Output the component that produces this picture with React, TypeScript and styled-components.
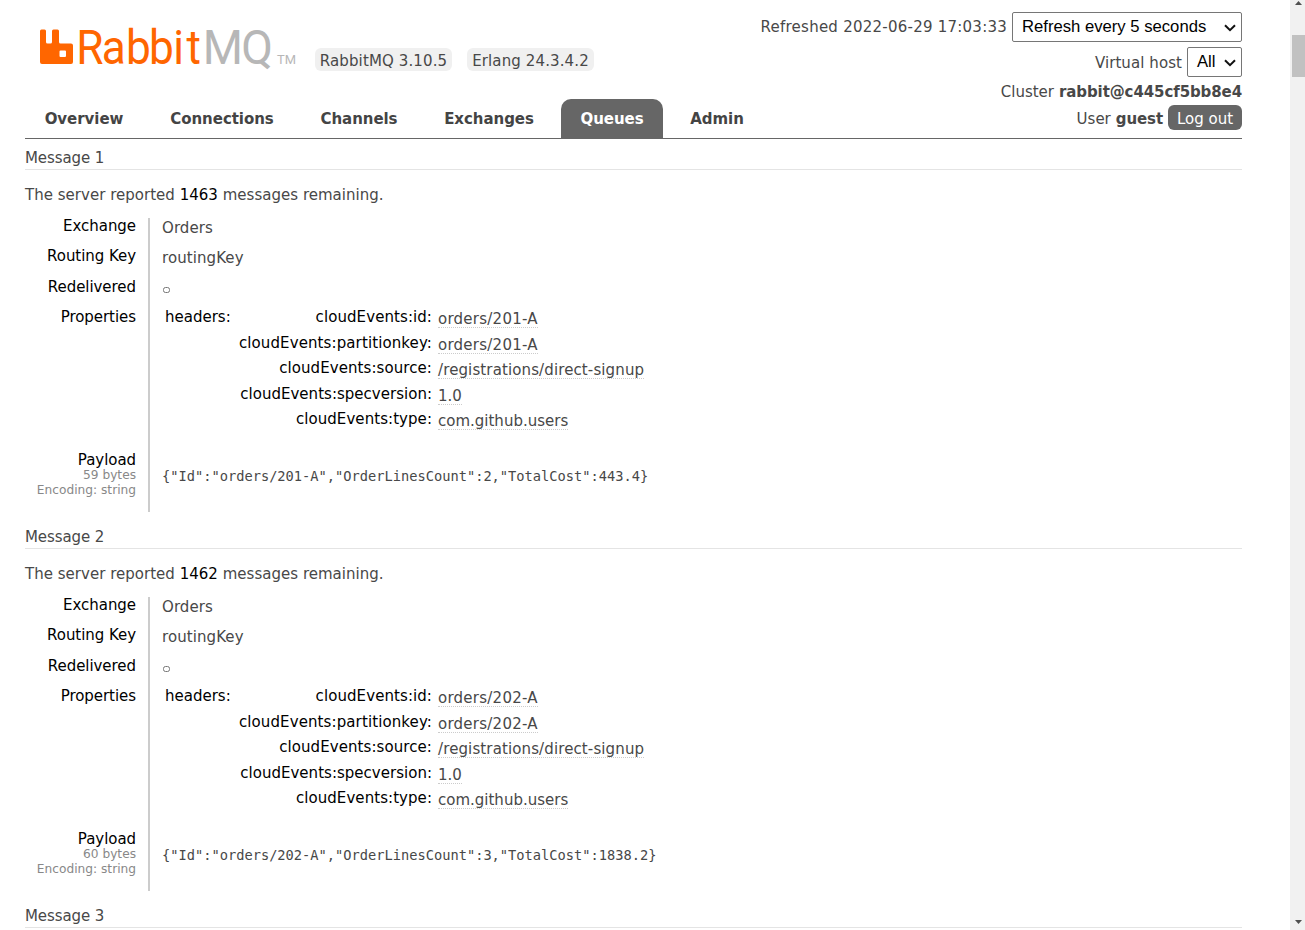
import React from 'react';
import styled, { createGlobalStyle, css } from 'styled-components';

const GlobalStyle = createGlobalStyle`
  html, body { margin: 0; padding: 0; background: #fff; }
  body {
    height: 930px;
    overflow: hidden;
    color: #484848;
    font: 15px/18px Verdana, "DejaVu Sans", sans-serif;
  }
  * { box-sizing: border-box; }
`;

const Page = styled.div`
  display: flex;
  width: 1305px;
  height: 930px;
  overflow: hidden;
`;

const Content = styled.div`
  flex: 1;
  min-width: 0;
  padding: 0 48px 0 25px;
  overflow: hidden;
`;

const Header = styled.header`
  display: grid;
  grid-template-columns: 730px 487px;
  height: 139px;
  border-bottom: 1px solid #666;
`;

const Brand = styled.div`
  display: flex;
  flex-direction: column;
  justify-content: space-between;
`;

const LogoRow = styled.div`
  display: flex;
  align-items: flex-start;
  padding: 24px 0 0 14px;
`;

const LogoSvg = styled.svg`
  display: block;
  margin-right: 16px;
  overflow: visible;
`;

const Version = styled.span<{ $width: number }>`
  width: ${p => p.$width}px;
  height: 23px;
  margin: 24px 15px 0 0;
  border-radius: 6px;
  background: #f0f0f0;
  text-align: center;
  line-height: 26px;
  letter-spacing: 0.12px;
  white-space: nowrap;
`;

const Tabs = styled.nav`
  display: flex;
  gap: 8px;
`;

const Tab = styled.a<{ $width: number; $active?: boolean }>`
  flex: none;
  width: ${p => p.$width}px;
  height: 39px;
  border-radius: 10px 10px 0 0;
  text-align: center;
  font-weight: bold;
  line-height: 41px;
  letter-spacing: -0.05px;
  color: #444;
  ${p => p.$active && css`
    background: #666;
    color: #fff;
  `}
`;

const Status = styled.div`
  display: flex;
  flex-direction: column;
  align-items: flex-end;
  padding-top: 12px;
`;

const StatusLine = styled.div<{ $height: number }>`
  display: flex;
  align-items: center;
  height: ${p => p.$height}px;
  gap: 5px;
  white-space: nowrap;
  b { letter-spacing: -0.1px; }
`;

const StatusText = styled.span<{ $tracking?: number; $drop?: number }>`
  padding-top: ${p => p.$drop ?? 0}px;
  letter-spacing: ${p => p.$tracking ?? 0}px;
`;

const SelectBox = styled.div<{ $width: number }>`
  display: flex;
  align-items: center;
  justify-content: space-between;
  width: ${p => p.$width}px;
  height: 30px;
  padding: 0 5px 0 9px;
  border: 1px solid #767676;
  border-radius: 2px;
  color: #000;
  font: 16.67px/20px Arial, "Liberation Sans", sans-serif;
`;

const Chevron = styled.svg`
  margin-top: 1px;
`;

const Logout = styled.button`
  width: 74px;
  height: 25px;
  margin-bottom: 4px;
  padding: 0;
  border: 0;
  border-radius: 6px;
  background: #666;
  color: #fff;
  font: inherit;
  line-height: 28px;
`;

const MessageBlock = styled.section`
  height: 379px;
`;

const MessageTitle = styled.h3`
  height: 31px;
  margin: 0;
  padding-top: 10px;
  border-bottom: 1px solid #e4e4e4;
  font-size: 15px;
  font-weight: normal;
  line-height: 18px;
  letter-spacing: -0.1px;
`;

const Remaining = styled.p`
  margin: 0;
  padding: 16px 0 14px;
  line-height: 18px;
  letter-spacing: 0.02px;
  b { font-weight: normal; color: #000; }
`;

const Facts = styled.div`
  display: grid;
  grid-template-columns: 125px 1fr;
  grid-template-rows: 30px 31px 30px 143px 60px;
`;

const Label = styled.div`
  padding-right: 12px;
  border-right: 2px solid #ccc;
  text-align: right;
  line-height: 16px;
  letter-spacing: -0.05px;
  color: #000;
`;

const SubLabel = styled.div`
  font-size: 12.2px;
  line-height: 15px;
  letter-spacing: 0;
  color: #888;
`;

const Value = styled.div`
  padding: 2px 0 0 12px;
  line-height: 16px;
  letter-spacing: 0.08px;
`;

const Unset = styled.svg`
  display: block;
  margin-top: 2px;
`;

const Payload = styled.pre`
  margin: 0;
  padding: 16px 0 0 12px;
  font: 13.7px/16px Consolas, "DejaVu Sans Mono", monospace;
`;

const Properties = styled.div`
  display: flex;
  padding-left: 15px;
  line-height: 16px;
`;

const PropertyName = styled.div`
  width: 66px;
  color: #000;
`;

const HeaderTable = styled.div`
  display: grid;
  grid-template-columns: 201px auto;
  grid-template-rows: 26px 25px 26px 25px 26px;
  column-gap: 6px;
`;

const HeaderName = styled.div<{ $tracking: number }>`
  text-align: right;
  letter-spacing: ${p => p.$tracking}px;
  color: #000;
  white-space: nowrap;
`;

const HeaderValue = styled.div`
  padding-top: 2px;
`;

const Abbr = styled.span<{ $tracking: number }>`
  display: inline-block;
  height: 17px;
  border-bottom: 1px dotted #ccc;
  letter-spacing: ${p => p.$tracking}px;
`;

const Scrollbar = styled.div`
  display: flex;
  flex-direction: column;
  justify-content: space-between;
  align-items: center;
  width: 15px;
  background: #f1f1f1;
`;

const Thumb = styled.div`
  width: 13px;
  height: 42px;
  margin: 29px 0 auto 2px;
  background: #c1c1c1;
`;

const Arrow = styled.svg`
  display: block;
  margin-left: 2px;
`;

function Logo() {
  return (
    <LogoSvg width="260" height="48" viewBox="0 0 260 48" aria-label="RabbitMQ">
      <path
        fill="#f60"
        fillRule="evenodd"
        d="M2.5 5.5H5.5Q7 5.5 7 7V18Q7 19.500 8.500 19.500H11.500Q13 19.500 13 18V7Q13 5.500 14.500 5.500H18.500Q20 5.500 20 7V18Q20 19.500 21.500 19.500H32Q34 19.500 34 21.500V38Q34 40 32 40H3Q1 40 1 38V7Q1 5.500 2.500 5.500ZM21.500 26.500Q20.500 26.500 20.500 27.500V32Q20.500 33 21.500 33H26Q27 33 27 32V27.500Q27 26.500 26 26.500Z"
      />
      <text transform="scale(0.92 1)" x="40.6 68.2 94.7 119.7 146 160.3" y="40" fill="#f60" fontFamily="Roboto" fontSize="48">Rabbit</text>
      <text transform="scale(0.96 1)" x="170.5 210.8" y="40" fill="#b7b7b7" fontFamily="Roboto" fontSize="48">MQ</text>
      <text x="238" y="40" fill="#b7b7b7" fontFamily="Roboto" fontSize="12.500" textLength="19" lengthAdjust="spacingAndGlyphs">TM</text>
    </LogoSvg>
  );
}

function Select({ width, children }: { width: number; children: React.ReactNode }) {
  return (
    <SelectBox $width={width}>
      {children}
      <Chevron width="12" height="8" viewBox="0 0 12 8">
        <path d="M1 1.200L6 6.200L11 1.200" fill="none" stroke="#111" strokeWidth="2" />
      </Chevron>
    </SelectBox>
  );
}

const tabs = [
  { name: 'Overview', width: 118 },
  { name: 'Connections', width: 142 },
  { name: 'Channels', width: 116 },
  { name: 'Exchanges', width: 128 },
  { name: 'Queues', width: 102, active: true },
  { name: 'Admin', width: 92 },
];

const messages = [
  { n: 1, remaining: 1463, id: 'orders/201-A', bytes: 59, payload: '{"Id":"orders/201-A","OrderLinesCount":2,"TotalCost":443.4}' },
  { n: 2, remaining: 1462, id: 'orders/202-A', bytes: 60, payload: '{"Id":"orders/202-A","OrderLinesCount":3,"TotalCost":1838.2}' },
];

function Message({ m }: { m: (typeof messages)[number] }) {
  const headers = [
    { name: 'cloudEvents:id:', nameTracking: 0.08, value: m.id, tracking: 0.25 },
    { name: 'cloudEvents:partitionkey:', nameTracking: 0.11, value: m.id, tracking: 0.25 },
    { name: 'cloudEvents:source:', nameTracking: 0.08, value: '/registrations/direct-signup', tracking: 0.12 },
    { name: 'cloudEvents:specversion:', nameTracking: 0.02, value: '1.0', tracking: 0 },
    { name: 'cloudEvents:type:', nameTracking: 0.06, value: 'com.github.users', tracking: 0 },
  ];
  return (
    <MessageBlock>
      <MessageTitle>Message {m.n}</MessageTitle>
      <Remaining>The server reported <b>{m.remaining}</b> messages remaining.</Remaining>
      <Facts>
        <Label>Exchange</Label>
        <Value>Orders</Value>
        <Label>Routing Key</Label>
        <Value>routingKey</Value>
        <Label>Redelivered</Label>
        <Value>
          <Unset width="9" height="12" viewBox="0 0 9 12"><rect x="1.500" y="4.500" width="6" height="5" rx="2" fill="none" stroke="#777" strokeWidth="1" /></Unset>
        </Value>
        <Label>Properties</Label>
        <Properties>
          <PropertyName>headers:</PropertyName>
          <HeaderTable>
            {headers.map(h => (
              <React.Fragment key={h.name}>
                <HeaderName $tracking={h.nameTracking}>{h.name}</HeaderName>
                <HeaderValue><Abbr $tracking={h.tracking}>{h.value}</Abbr></HeaderValue>
              </React.Fragment>
            ))}
          </HeaderTable>
        </Properties>
        <Label>
          Payload
          <SubLabel>{m.bytes} bytes</SubLabel>
          <SubLabel>Encoding: string</SubLabel>
        </Label>
        <Payload>{m.payload}</Payload>
      </Facts>
    </MessageBlock>
  );
}

export default function App() {
  return (
    <>
      <GlobalStyle />
      <Page>
        <Content>
          <Header>
            <Brand>
              <LogoRow>
                <Logo />
                <Version $width={137}>RabbitMQ 3.10.5</Version>
                <Version $width={127}>Erlang 24.3.4.2</Version>
              </LogoRow>
              <Tabs>
                {tabs.map(t => <Tab key={t.name} $width={t.width} $active={t.active}>{t.name}</Tab>)}
              </Tabs>
            </Brand>
            <Status>
              <StatusLine $height={30}>
                <StatusText $tracking={0.24}>Refreshed 2022-06-29 17:03:33</StatusText>
                <Select width={230}>Refresh every 5 seconds</Select>
              </StatusLine>
              <StatusLine $height={40}>
                <StatusText $tracking={0.08} $drop={2}>Virtual host</StatusText>
                <Select width={55}>All</Select>
              </StatusLine>
              <StatusLine $height={20}>Cluster <b>rabbit@c445cf5bb8e4</b></StatusLine>
              <StatusLine $height={34}>User <b>guest</b> <Logout>Log out</Logout></StatusLine>
            </Status>
          </Header>
          {messages.map(m => <Message key={m.n} m={m} />)}
          <MessageTitle>Message 3</MessageTitle>
        </Content>
        <Scrollbar>
          <Arrow width="7" height="6" viewBox="0 0 7 6"><path d="M0 5L3.500 1L7 5Z" fill="#505050" /></Arrow>
          <Thumb />
          <Arrow width="7" height="10" viewBox="0 0 7 10"><path d="M0 0L3.500 4L7 0Z" fill="#505050" /></Arrow>
        </Scrollbar>
      </Page>
    </>
  );
}
